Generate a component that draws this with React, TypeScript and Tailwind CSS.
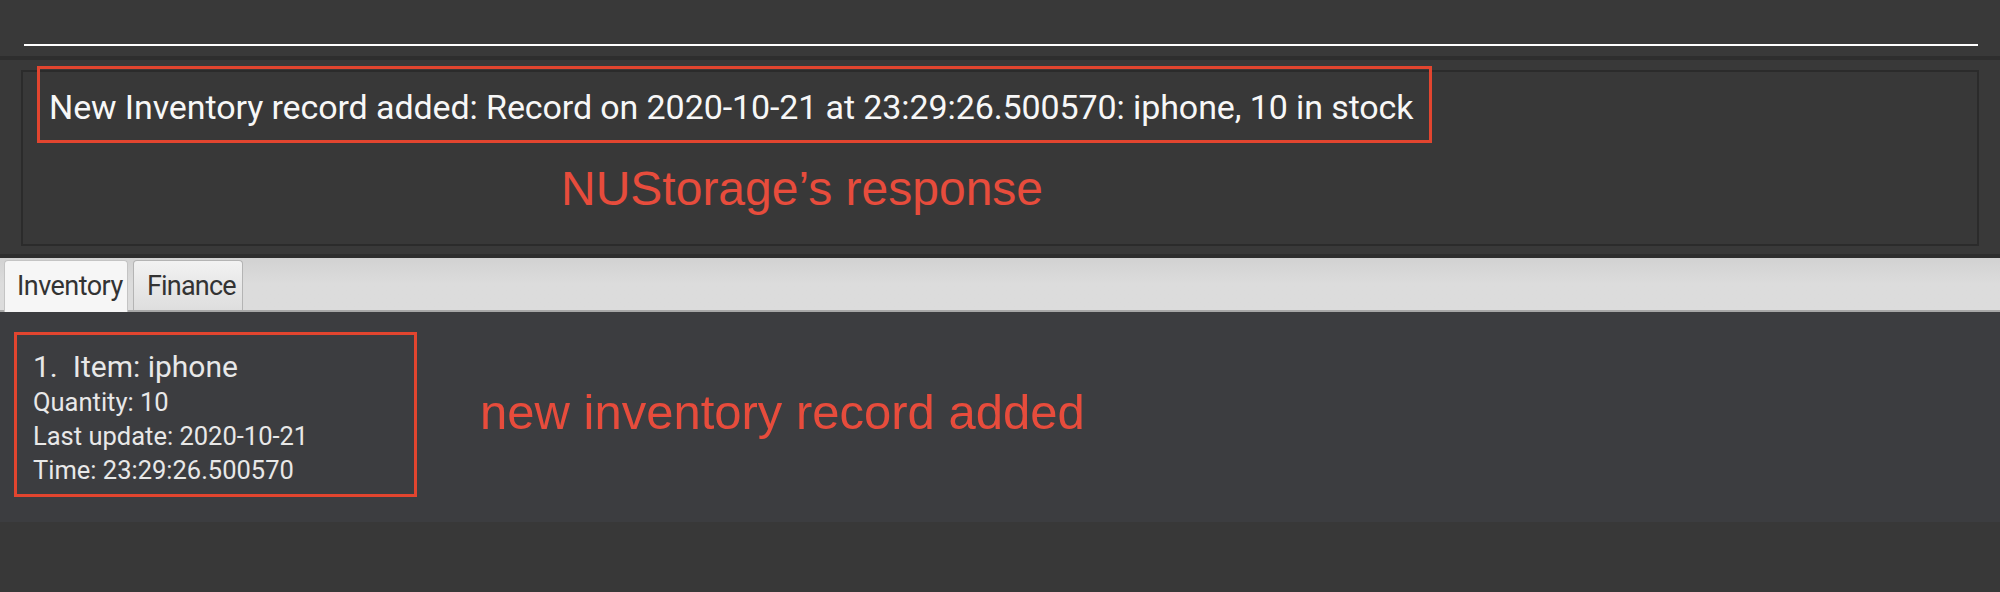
export default function App() {
  return (
    <div className="w-[2000px] h-[592px] bg-[#383838] flex flex-col [font-family:Roboto,sans-serif] overflow-hidden">
      {/* command box area */}
      <div className="h-[56px] bg-[#393939] pl-[24px] pr-[22px] pt-[44px] shrink-0">
        <div className="h-[2px] bg-white" />
      </div>
      <div className="h-[4px] bg-[#2e2e2e] shrink-0" />

      {/* result display */}
      <div className="h-[198px] bg-[#393939] flex flex-col shrink-0">
        <div className="mx-[21px] mt-[10px] h-[176px] border-2 border-[#2b2b2b] bg-[#383838] relative pl-[26px] pt-[15px]">
          <div className="text-[34px] leading-[40px] text-[#f7f7f7] tracking-[-0.1px] whitespace-nowrap">
            New Inventory record added: Record on 2020-10-21 at 23:29:26.500570: iphone, 10 in stock
          </div>
          <div className="absolute left-[14px] top-[-6px] w-[1395px] h-[77px] border-[3px] border-[#e2452f]" />
          <div className="absolute left-[538px] top-[93px] text-[48px] leading-[48px] text-[#e74c3c] whitespace-nowrap [font-family:Liberation_Sans,Arial,sans-serif]">
            NUStorage’s response
          </div>
        </div>
        <div className="flex-1" />
        <div className="h-[4px] bg-[#2e2e2e]" />
      </div>

      {/* tab bar */}
      <div className="h-[54px] bg-gradient-to-b from-[#d2d2d2] via-[#dcdcdc] to-[#dcdcdc] border-b-2 border-[#a7a7a7] flex items-end gap-[5px] pl-[4px] shrink-0">
        <div className="w-[124px] h-[52px] -mb-[2px] rounded-t-[4px] bg-[#f6f6f6] border border-b-0 border-[#c4c4c4] pl-[12px] pt-[9px] text-[27px] leading-[32px] text-[#333333] tracking-[-0.02em]">
          Inventory
        </div>
        <div className="w-[110px] h-[50px] rounded-t-[4px] bg-gradient-to-b from-[#f2f2f2] to-[#dedede] border border-b-0 border-[#b4b4b4] pl-[13px] pt-[9px] text-[27px] leading-[32px] text-[#333333] tracking-[-0.03em]">
          Finance
        </div>
      </div>

      {/* list */}
      <div className="h-[210px] bg-[#3c3d40] relative pl-[33px] pt-[37px] shrink-0 text-[#e8e8e8]">
        <div className="flex text-[30px] leading-[36px] whitespace-nowrap">
          <span>1.</span>
          <span className="ml-[15px]">Item: iphone</span>
        </div>
        <div className="text-[25.5px] leading-[34px]">Quantity: 10</div>
        <div className="text-[25.5px] leading-[34px]">Last update: 2020-10-21</div>
        <div className="text-[25.5px] leading-[34px]">Time: 23:29:26.500570</div>
        <div className="absolute left-[14px] top-[20px] w-[403px] h-[165px] border-[3px] border-[#e2452f]" />
        <div className="absolute left-[480px] top-[76px] text-[49px] leading-[49px] text-[#e74c3c] whitespace-nowrap [font-family:Liberation_Sans,Arial,sans-serif]">
          new inventory record added
        </div>
      </div>

      <div className="flex-1 bg-[#383838]" />
    </div>
  );
}
